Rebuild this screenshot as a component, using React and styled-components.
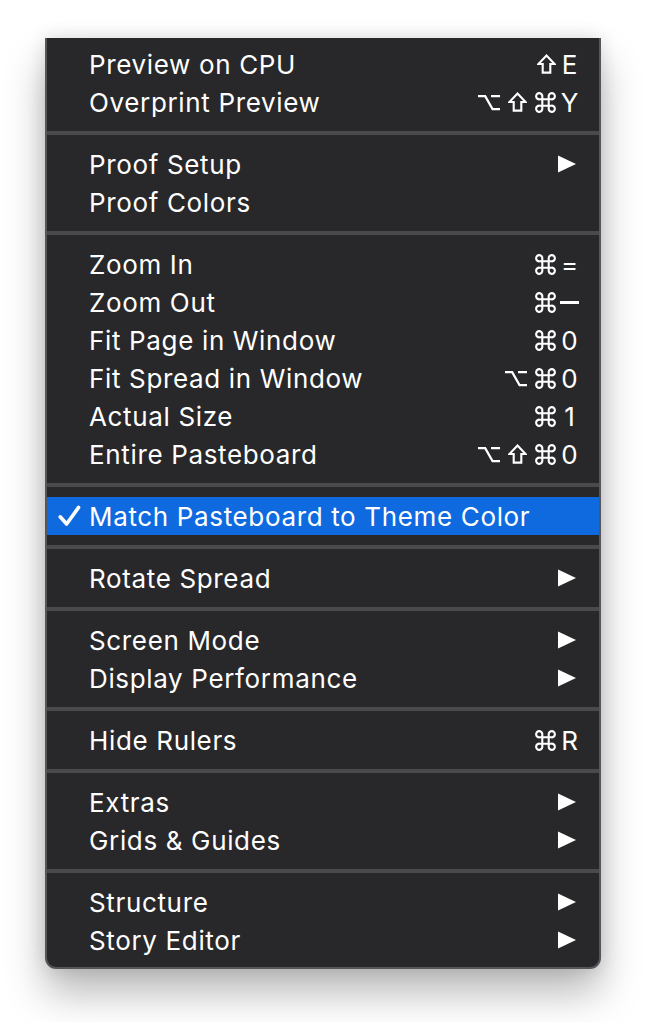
import React from 'react';
import styled, { createGlobalStyle } from 'styled-components';

const GlobalStyle = createGlobalStyle`
    html, body {
        margin: 0;
        padding: 0;
        background: #ffffff;
    }
    body {
        font-family: "Inter", "Noto Sans", "DejaVu Sans", sans-serif;
        -webkit-font-smoothing: antialiased;
    }
`;

const groups = [
    [
        { label: 'Preview on CPU', keys: ['shift', 'E'] },
        { label: 'Overprint Preview', keys: ['opt', 'shift', 'cmd', 'Y'] },
    ],
    [
        { label: 'Proof Setup', sub: true },
        { label: 'Proof Colors' },
    ],
    [
        { label: 'Zoom In', keys: ['cmd', '='] },
        { label: 'Zoom Out', keys: ['cmd', 'minus'] },
        { label: 'Fit Page in Window', keys: ['cmd', '0'] },
        { label: 'Fit Spread in Window', keys: ['opt', 'cmd', '0'] },
        { label: 'Actual Size', keys: ['cmd', '1'] },
        { label: 'Entire Pasteboard', keys: ['opt', 'shift', 'cmd', '0'] },
    ],
    [
        { label: 'Match Pasteboard to Theme Color', checked: true, active: true },
    ],
    [
        { label: 'Rotate Spread', sub: true },
    ],
    [
        { label: 'Screen Mode', sub: true },
        { label: 'Display Performance', sub: true },
    ],
    [
        { label: 'Hide Rulers', keys: ['cmd', 'R'] },
    ],
    [
        { label: 'Extras', sub: true },
        { label: 'Grids & Guides', sub: true },
    ],
    [
        { label: 'Structure', sub: true },
        { label: 'Story Editor', sub: true },
    ],
];

// modifier key glyphs, drawn to match the mac menu symbols
const ShiftIcon = () => (
    <svg width="19" height="20" viewBox="0 0 19 20">
        <path d="M9.5 1.6 L17.6 10 H13.3 V18.6 H5.7 V10 H1.4 Z" fill="none" stroke="#fff" strokeWidth="2.1" />
    </svg>
);

const OptionIcon = () => (
    <svg width="22" height="17" viewBox="0 0 22 17">
        <path d="M0 2.2 H7.2 L14.6 15.2 H22 M13 2.2 H22" fill="none" stroke="#fff" strokeWidth="2.3" />
    </svg>
);

const CommandIcon = () => (
    <svg width="21" height="21" viewBox="0 0 21 21">
        <path
            d="M7.3 7.3 V4.6 A3.1 3.1 0 1 0 4.6 7.3 H16.4 A3.1 3.1 0 1 0 13.7 4.6 V16.4 A3.1 3.1 0 1 0 16.4 13.7 H4.6 A3.1 3.1 0 1 0 7.3 16.4 Z"
            fill="none"
            stroke="#fff"
            strokeWidth="2.1"
        />
    </svg>
);

const CheckIcon = () => (
    <svg width="23" height="22" viewBox="0 0 23 22">
        <path d="M2.2 11.8 L8.6 19 L20.6 2.4" fill="none" stroke="#fff" strokeWidth="3.6" strokeLinecap="round" strokeLinejoin="round" />
    </svg>
);

const SubArrow = () => (
    <svg width="18" height="18" viewBox="0 0 18 18">
        <polygon points="0,0.5 18,9 0,17.5" fill="#ffffff" />
    </svg>
);

const modIcons = {
    shift: <ShiftIcon />,
    opt: <OptionIcon />,
    cmd: <CommandIcon />,
};

const App = () => {
    return (
        <>
            <GlobalStyle />
            <Page>
                <Menu>
                    {groups.map((group, gi) => (
                        <React.Fragment key={gi}>
                            {gi > 0 && <Separator />}
                            <Group $first={gi === 0} $last={gi === groups.length - 1}>
                                {group.map((item) => (
                                    <Row key={item.label} $active={item.active}>
                                        <Check>{item.checked && <CheckIcon />}</Check>
                                        <Label>{item.label}</Label>
                                        {item.keys && (
                                            <Shortcut>
                                                {item.keys.map((k, i) =>
                                                    modIcons[k] ? (
                                                        <Mod key={i} $first={i === 0}>{modIcons[k]}</Mod>
                                                    ) : k === 'minus' ? (
                                                        <Key key={i}><Minus /></Key>
                                                    ) : (
                                                        <Key key={i}>{k}</Key>
                                                    )
                                                )}
                                            </Shortcut>
                                        )}
                                        {item.sub && (
                                            <Arrow>
                                                <SubArrow />
                                            </Arrow>
                                        )}
                                    </Row>
                                ))}
                            </Group>
                        </React.Fragment>
                    ))}
                </Menu>
            </Page>
        </>
    );
};

export default App;

const Page = styled.div`
    width: 646px;
    height: 1022px;
    padding: 38px 0 0 45px;
    box-sizing: border-box;
    overflow: hidden;
`;

const Menu = styled.div`
    width: 556px;
    box-sizing: border-box;
    background: #28282a;
    border: 2px solid #56565a;
    border-top: none;
    border-radius: 0 0 11px 11px;
    box-shadow: 0 24px 40px rgba(0, 0, 0, 0.28), 0 0 18px rgba(0, 0, 0, 0.12);
    color: #ffffff;
`;

const Group = styled.div`
    display: flex;
    flex-direction: column;
    padding-top: ${p => (p.$first ? '7px' : '10px')};
    padding-bottom: ${p => (p.$last ? '8px' : '10px')};
`;

const Separator = styled.div`
    height: 4px;
    background: #4a4a4d;
`;

const Row = styled.div`
    display: flex;
    align-items: center;
    height: 38px;
    padding: 0 20px 0 0;
    background: ${p => (p.$active ? '#0f6adf' : 'transparent')};
    font-size: 26px;
    letter-spacing: 0.65px;
`;

const Check = styled.span`
    width: 42px;
    flex: none;
    display: flex;
    align-items: center;
    padding-left: 11px;
    box-sizing: border-box;
`;

const Label = styled.span`
    flex: 1;
    white-space: nowrap;
`;

const Shortcut = styled.span`
    display: flex;
    align-items: center;
`;

const Mod = styled.span`
    display: flex;
    align-items: center;
    margin-left: ${p => (p.$first ? '0' : '8px')};
`;

const Key = styled.span`
    display: flex;
    align-items: center;
    justify-content: center;
    margin-left: 4px;
    min-width: 19px;
    letter-spacing: 0;
`;

const Minus = styled.span`
    display: block;
    width: 19px;
    height: 3px;
    background: #ffffff;
`;

const Arrow = styled.span`
    display: flex;
    align-items: center;
    margin-right: 3px;
`;
